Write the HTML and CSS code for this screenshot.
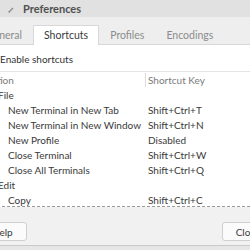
FILE: index.html
```html
<!DOCTYPE html>
<html lang="en">
<head>
    <meta charset="UTF-8">
    <title>Preferences</title>
    <link rel="stylesheet" href="styles.css">
</head>
<body>
<div class="window">
    <div class="titlebar">
        <svg class="title-icon" width="6" height="6" viewBox="0 0 6 6">
            <path d="M1 5 L5 1" stroke="#8a8a8a" stroke-width="1.2" fill="none"/>
            <circle cx="1.2" cy="4.8" r="0.9" fill="#8a8a8a"/>
        </svg>
        <span class="title">Preferences</span>
    </div>

    <div class="tabs">
        <div class="tab">General</div>
        <div class="tab active">Shortcuts</div>
        <div class="tab">Profiles</div>
        <div class="tab">Encodings</div>
    </div>

    <div class="page">
        <div class="enable-row">
            <span class="check"></span>
            <span class="enable-label">Enable shortcuts</span>
        </div>

        <div class="tree">
            <div class="tree-row tree-header">
                <div class="col-action">Action</div>
                <div class="col-key">Shortcut Key</div>
            </div>
            <div class="tree-row">
                <div class="col-action group">File</div>
                <div class="col-key"></div>
            </div>
            <div class="tree-row">
                <div class="col-action child">New Terminal in New Tab</div>
                <div class="col-key">Shift+Ctrl+T</div>
            </div>
            <div class="tree-row">
                <div class="col-action child">New Terminal in New Window</div>
                <div class="col-key">Shift+Ctrl+N</div>
            </div>
            <div class="tree-row">
                <div class="col-action child">New Profile</div>
                <div class="col-key">Disabled</div>
            </div>
            <div class="tree-row">
                <div class="col-action child">Close Terminal</div>
                <div class="col-key">Shift+Ctrl+W</div>
            </div>
            <div class="tree-row">
                <div class="col-action child">Close All Terminals</div>
                <div class="col-key">Shift+Ctrl+Q</div>
            </div>
            <div class="tree-row">
                <div class="col-action group">Edit</div>
                <div class="col-key"></div>
            </div>
            <div class="tree-row">
                <div class="col-action child">Copy</div>
                <div class="col-key">Shift+Ctrl+C</div>
            </div>
            <div class="tree-row">
                <div class="col-action child">Paste</div>
                <div class="col-key">Shift+Ctrl+V</div>
            </div>
        </div>
    </div>

    <div class="actions">
        <button class="btn">Help</button>
        <button class="btn">Close</button>
    </div>
</div>
</body>
</html>
```

FILE: styles.css
```css
body {
    margin: 0;
    overflow: hidden;
    background-color: #e6e6e6;
    font-family: Lato, "Noto Sans", sans-serif;
    font-size: 10px;
    color: #3a3a3a;
}
.window {
    width: 328px;
    margin-left: -38px;
    background-color: #ffffff;
}
.titlebar {
    height: 17px;
    display: flex;
    align-items: center;
    padding-left: 46px;
    background-color: #e1e1e1;
}
.title-icon {
    margin-right: 9px;
    margin-top: 3px;
}
.title {
    font-size: 11px;
    font-weight: bold;
    color: #505050;
}
.tabs {
    height: 27px;
    display: flex;
    align-items: flex-end;
    padding-left: 13px;
    background-color: #eeeeee;
    border-bottom: 1px solid #d8d8d8;
}
.tab {
    height: 18px;
    line-height: 18px;
    padding: 0 11px;
    font-size: 10.5px;
    color: #8c8c8c;
}
.tab.active {
    background-color: #ffffff;
    color: #3a3a3a;
    border: 1px solid #d8d8d8;
    border-bottom: none;
    margin-bottom: -1px;
    height: 19px;
    line-height: 18px;
    padding: 0 10px;
}
.page {
    padding-top: 7px;
}
.enable-row {
    display: flex;
    align-items: center;
    height: 14px;
    margin-left: 20px;
    color: #333333;
}
.check {
    flex: none;
    width: 12px;
    height: 12px;
    margin-right: 4px;
    border: 1px solid #b8b8b8;
    border-radius: 2px;
    background-color: #4a90d9;
}
.tree {
    margin-top: 5px;
    height: 134px;
    overflow: hidden;
    border-top: 1px solid #e4e4e4;
    border-bottom: 1px dashed #9a9a9a;
    padding-left: 19px;
}
.tree-row {
    display: grid;
    grid-template-columns: 164px 1fr;
    height: 15px;
    line-height: 15px;
    white-space: nowrap;
}
.tree-header {
    height: 16px;
    line-height: 16px;
    color: #7a7a7a;
}
.tree-header .col-action {
    padding-left: 4px;
}
.tree-header .col-key {
    padding-left: 2px;
    border-left: 1px solid #dcdcdc;
    margin: 1px 0;
    line-height: 14px;
}
.col-key {
    padding-left: 3px;
}
.col-action.group {
    padding-left: 17px;
}
.col-action.child {
    padding-left: 27px;
}
.actions {
    display: flex;
    justify-content: space-between;
    padding: 15px 16px 4px;
    background-color: #f1f1f1;
    border-bottom: 1px solid #c9c9c9;
}
.btn {
    font-family: Lato, "Noto Sans", sans-serif;
    font-size: 10px;
    color: #3a3a3a;
    height: 19px;
    padding: 0 13px;
    background-color: #fbfbfb;
    border: 1px solid #cfcfcf;
    border-radius: 3px;
}
```
